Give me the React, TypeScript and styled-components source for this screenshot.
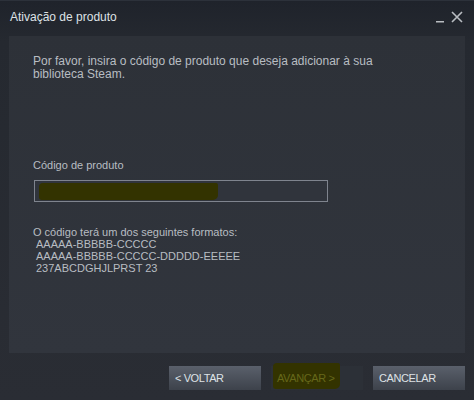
import React from "react";
import styled, { createGlobalStyle } from "styled-components";

const Global = createGlobalStyle`
  html, body { margin: 0; padding: 0; background: #282c33; }
  body { width: 474px; height: 400px; overflow: hidden; font-family: Arial, "Liberation Sans", sans-serif; }
`;

const Window = styled.div`
  width: 474px;
  height: 400px;
  box-sizing: border-box;
  display: flex;
  flex-direction: column;
  background: linear-gradient(180deg, #1f232b 0px, #252930 40px, #2a2d34 100%);
  border-top: 1px solid #2c313a;
`;

const TitleBar = styled.div`
  height: 35px;
  display: flex;
  align-items: flex-start;
  padding: 9px 10px 0 10px;
  box-sizing: border-box;
`;

const Title = styled.div`
  flex: 1;
  font-size: 12px;
  color: #dee2e6;
`;

const WinButtons = styled.div`
  display: flex;
  gap: 6px;
  align-items: center;
  margin-top: 1px;
  margin-right: 1px;
`;

const Panel = styled.div`
  margin: 0 9px;
  height: 317px;
  background: linear-gradient(180deg, #2d3138 0%, #31353d 100%);
  padding: 19px 24px 0 24px;
  box-sizing: border-box;
  display: flex;
  flex-direction: column;
`;

const Text = styled.div`
  font-size: 11px;
  line-height: 12px;
  color: #b8bdc2;
`;

const Intro = styled(Text)`
  width: 420px;
  font-size: 12px;
  line-height: 13px;
`;

const Label = styled(Text)`
  margin-top: 78px;
`;

const Input = styled.div`
  margin-top: 9px;
  margin-left: 1px;
  width: 294px;
  height: 22px;
  box-sizing: border-box;
  border: 1px solid #7f848e;
  background: #30343c;
  position: relative;
`;

const Scribble = styled.div<{ $w: number; $h: number; $l: number; $t: number }>`
  position: absolute;
  left: ${(p) => p.$l}px;
  top: ${(p) => p.$t}px;
  width: ${(p) => p.$w}px;
  height: ${(p) => p.$h}px;
  background: #333300;
  border-radius: 4px 2px 5px 3px;
`;

const Formats = styled(Text)`
  margin-top: 24px;
`;

const FormatLine = styled(Text)`
  padding-left: 3px;
`;

const Footer = styled.div`
  display: flex;
  justify-content: flex-end;
  gap: 10px;
  padding: 13px 9px 0 0;
`;

const Button = styled.div<{ $disabled?: boolean }>`
  width: 92px;
  height: 24px;
  box-sizing: border-box;
  display: flex;
  align-items: center;
  padding-left: 6px;
  font-size: 11px;
  letter-spacing: -0.4px;
  color: ${(p) => (p.$disabled ? "#66681a" : "#dee2e6")};
  background: ${(p) =>
    p.$disabled ? "#2c3037" : "linear-gradient(180deg, #5a606b 0%, #3d424b 100%)"};
  position: relative;
`;

const ButtonLabel = styled.span`
  position: relative;
  z-index: 1;
`;

export default function App() {
  return (
    <>
      <Global />
      <Window>
        <TitleBar>
          <Title>Ativação de produto</Title>
          <WinButtons>
            <svg width="9" height="12" viewBox="0 0 9 12">
              <rect x="0" y="10" width="8" height="1.5" fill="#b9bdc2" />
            </svg>
            <svg width="12" height="12" viewBox="0 0 12 12">
              <path d="M1 1 L11 11 M11 1 L1 11" stroke="#b9bdc2" strokeWidth="1.6" />
            </svg>
          </WinButtons>
        </TitleBar>
        <Panel>
          <Intro>
            Por favor, insira o código de produto que deseja adicionar à sua
            <br />
            biblioteca Steam.
          </Intro>
          <Label>Código de produto</Label>
          <Input>
            <Scribble $l={4} $t={2} $w={179} $h={17} />
          </Input>
          <Formats>O código terá um dos seguintes formatos:</Formats>
          <FormatLine>AAAAA-BBBBB-CCCCC</FormatLine>
          <FormatLine>AAAAA-BBBBB-CCCCC-DDDDD-EEEEE</FormatLine>
          <FormatLine>237ABCDGHJLPRST 23</FormatLine>
        </Panel>
        <Footer>
          <Button>
            <ButtonLabel>&lt; VOLTAR</ButtonLabel>
          </Button>
          <Button $disabled>
            <Scribble $l={2} $t={-3} $w={67} $h={26} />
            <ButtonLabel>AVANÇAR &gt;</ButtonLabel>
          </Button>
          <Button>
            <ButtonLabel>CANCELAR</ButtonLabel>
          </Button>
        </Footer>
      </Window>
    </>
  );
}
